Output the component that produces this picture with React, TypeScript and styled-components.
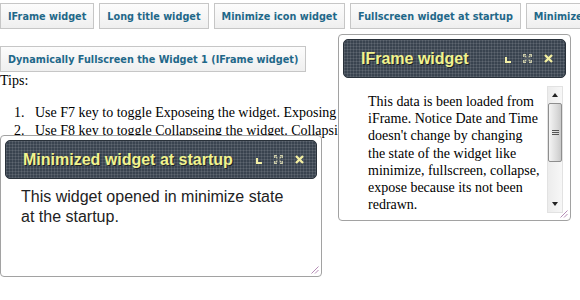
import React, { FC, ReactNode } from 'react';
import styled, { createGlobalStyle } from 'styled-components';

const GlobalStyle = createGlobalStyle`
  html, body {
    margin: 0;
    padding: 0;
    overflow: hidden;
    background: #fff;
  }
  body {
    font-family: "Liberation Serif", "Times New Roman", serif;
    font-size: 14px;
    color: #000;
  }
`;

const Page = styled.div`
  position: relative;
  width: 580px;
  height: 300px;
  overflow: hidden;
`;

const Toolbar = styled.div<{ $gap?: number }>`
  display: flex;
  gap: 5px;
  margin-top: ${(p) => p.$gap ?? 3}px;
  white-space: nowrap;
`;

const Button = styled.button`
  flex: none;
  height: 26px;
  padding: 0 7px;
  border: 1px solid #c6c6c6;
  border-radius: 0;
  background: linear-gradient(#fcfcfc, #efefef);
  color: #1f6889;
  font: bold 9.7px 'DejaVu Sans', Verdana, sans-serif;
  cursor: pointer;
`;

const Tips = styled.div`
  line-height: 18px;
`;

const TipList = styled.ol`
  margin: 14px 0;
  padding-left: 35px;
  line-height: 18px;
  white-space: nowrap;

  li::marker {
    content: counter(list-item) '.\\00a0\\00a0\\00a0';
  }
`;

const Window = styled.div<{ $x: number; $y: number; $w: number; $h: number }>`
  position: absolute;
  left: ${(p) => p.$x}px;
  top: ${(p) => p.$y}px;
  width: ${(p) => p.$w}px;
  height: ${(p) => p.$h}px;
  box-sizing: border-box;
  display: flex;
  flex-direction: column;
  padding: 4px;
  background: #fff;
  border: 1px solid #a2a2a2;
  border-radius: 4px;
`;

const Header = styled.div`
  flex: none;
  height: 39px;
  box-sizing: border-box;
  display: flex;
  align-items: center;
  padding: 0 12px 0 17px;
  border: 1px solid #29313a;
  border-radius: 5px;
  background-color: #39434f;
  background-image: linear-gradient(rgba(255, 255, 255, 0.1) 1px, transparent 1px),
    linear-gradient(90deg, rgba(255, 255, 255, 0.1) 1px, transparent 1px);
  background-size: 3px 3px;
`;

const Title = styled.div`
  flex: 1;
  color: #f1f38e;
  font: bold 16px 'Liberation Sans', Arial, sans-serif;
  text-shadow: 1px 1px 0 #1d2228;
  white-space: nowrap;
`;

const Tools = styled.div`
  display: flex;
  align-items: center;
  gap: 12px;
`;

const ToolIcon = styled.svg<{ $low?: boolean }>`
  display: block;
  margin-top: ${(p) => (p.$low ? 3 : 0)}px;
`;

const Grip = styled.svg`
  position: absolute;
  right: 2px;
  bottom: 2px;
`;

const PlainBody = styled.div`
  padding: 8px 0 0 16px;
  color: #222;
  font: 16px/20px 'Liberation Sans', Arial, sans-serif;
`;

const FrameBody = styled.div`
  flex: 1;
  display: flex;
  margin-top: 5px;
  min-height: 0;
`;

const FrameText = styled.div`
  width: 173px;
  padding: 10px 0 0 25px;
  font-size: 14px;
  line-height: 17.2px;
`;

const ScrollBar = styled.div`
  width: 16px;
  margin: 3px 3px 3px auto;
  display: flex;
  flex-direction: column;
  background: linear-gradient(90deg, #ececec, #f7f7f7);
  border: 1px solid #e2e2e2;
  box-sizing: border-box;
`;

const ScrollArrow = styled.div<{ $down?: boolean }>`
  flex: none;
  height: 16px;
  display: flex;
  align-items: center;
  justify-content: center;

  &::after {
    content: '';
    border-left: 3.5px solid transparent;
    border-right: 3.5px solid transparent;
    ${(p) => (p.$down ? 'border-top: 4px solid #222;' : 'border-bottom: 4px solid #222;')}
  }
`;

const Thumb = styled.div`
  flex: none;
  height: 59px;
  box-sizing: border-box;
  border: 1px solid #8e8e8e;
  border-radius: 2px;
  background: linear-gradient(90deg, #f4f4f4, #d8d8d8 70%, #c9c9c9);
  display: flex;
  align-items: center;
  justify-content: center;
`;

const GripLines = styled.div`
  width: 7px;
  height: 5px;
  border-top: 1px solid #555;
  border-bottom: 1px solid #555;
  box-sizing: border-box;
  display: flex;
  align-items: center;

  &::after {
    content: '';
    flex: 1;
    height: 1px;
    background: #555;
  }
`;

const Track = styled.div`
  flex: 1;
`;

const MinimizeIcon = () => (
  <ToolIcon $low width="6" height="6" viewBox="0 0 6 6">
    <path d="M1 0V5H6" fill="none" stroke="#f3efa6" strokeWidth="2" />
  </ToolIcon>
);

const FullscreenIcon = () => (
  <ToolIcon width="9" height="9" viewBox="0 0 9 9">
    <g fill="none" stroke="#cfceab" strokeWidth="1.3">
      <path d="M0.7 3V0.7H3M6 0.7H8.3V3M8.3 6V8.3H6M3 8.3H0.7V6" />
      <path d="M2 2L3.4 3.4M7 2L5.6 3.4M7 7L5.6 5.6M2 7L3.4 5.6" />
    </g>
  </ToolIcon>
);

const CloseIcon = () => (
  <ToolIcon width="9" height="9" viewBox="0 0 9 9">
    <path d="M1 1L8 8M8 1L1 8" stroke="#f4f0a2" strokeWidth="2.3" />
  </ToolIcon>
);

const ResizeGrip = () => (
  <Grip width="10" height="10" viewBox="0 0 10 10">
    <g stroke="#b58cb6" strokeWidth="1">
      <path d="M9.5 2.5L2.5 9.5" />
      <path d="M9.5 6L6 9.5" />
    </g>
  </Grip>
);

interface WidgetProps {
  title: string;
  x: number;
  y: number;
  w: number;
  h: number;
  children: ReactNode;
}

const Widget: FC<WidgetProps> = ({ title, x, y, w, h, children }) => (
  <Window $x={x} $y={y} $w={w} $h={h}>
    <Header>
      <Title>{title}</Title>
      <Tools>
        <MinimizeIcon />
        <FullscreenIcon />
        <CloseIcon />
      </Tools>
    </Header>
    {children}
    <ResizeGrip />
  </Window>
);

const buttons = [
  'IFrame widget',
  'Long title widget',
  'Minimize icon widget',
  'Fullscreen widget at startup',
  'Minimized widget at startup',
];

export default function App() {
  return (
    <Page>
      <GlobalStyle />
      <Toolbar>
        {buttons.map((label) => (
          <Button key={label}>{label}</Button>
        ))}
      </Toolbar>
      <Toolbar $gap={17}>
        <Button>Dynamically Fullscreen the Widget 1 (IFrame widget)</Button>
      </Toolbar>
      <Tips>Tips:</Tips>
      <TipList>
        <li>Use F7 key to toggle Exposeing the widget. Exposing widget brings it to the front.</li>
        <li>Use F8 key to toggle Collapseing the widget. Collapsing widget hides its content.</li>
      </TipList>

      <Widget title="Minimized widget at startup" x={0} y={135} w={322} h={142}>
        <PlainBody>
          This widget opened in minimize state
          <br />
          at the startup.
        </PlainBody>
      </Widget>

      <Widget title="IFrame widget" x={338} y={34} w={233} h={187}>
        <FrameBody>
          <FrameText>
            This data is been loaded from iFrame. Notice Date and Time doesn't change by
            changing the state of the widget like minimize, fullscreen, collapse, expose
            because its not been redrawn.
          </FrameText>
          <ScrollBar>
            <ScrollArrow />
            <Thumb>
              <GripLines />
            </Thumb>
            <Track />
            <ScrollArrow $down />
          </ScrollBar>
        </FrameBody>
      </Widget>
    </Page>
  );
}
